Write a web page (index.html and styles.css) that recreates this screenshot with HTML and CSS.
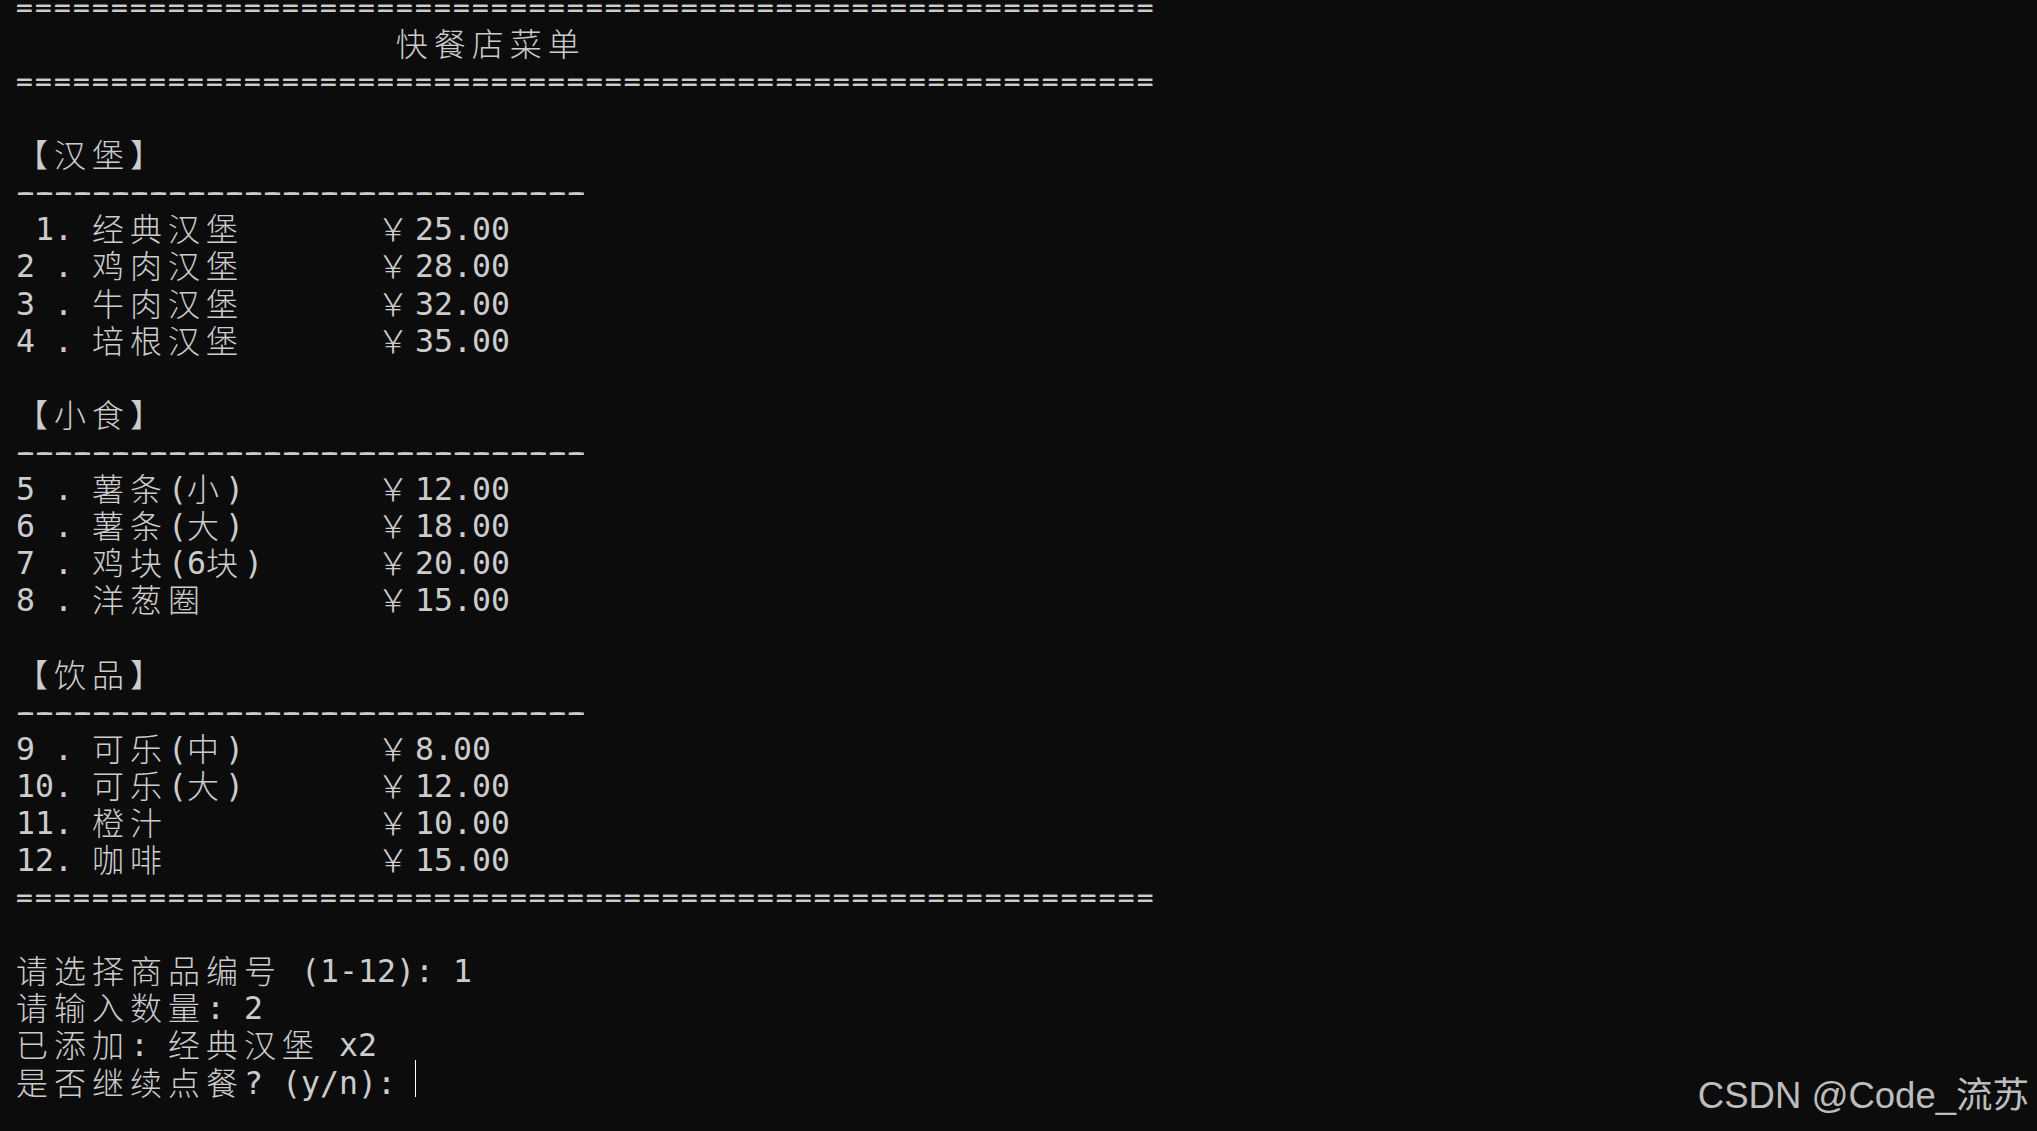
FILE: index.html
```html
<!DOCTYPE html>
<html lang="zh">
<head>
<meta charset="utf-8">
<title>快餐店菜单</title>
<link rel="stylesheet" href="styles.css">
</head>
<body>
<div class="term">
<div class="ln"><span class="eq">============================================================</span></div>
<div class="ln">                    <span class="c">快餐店菜单</span></div>
<div class="ln"><span class="eq">============================================================</span></div>
<div class="ln"></div>
<div class="ln"><span class="c">【汉堡】</span></div>
<div class="ln rule-dash">------------------------------</div>
<div class="ln"> 1. <span class="c">经典汉堡</span>       <span class="c">￥</span>25.00</div>
<div class="ln">2 . <span class="c">鸡肉汉堡</span>       <span class="c">￥</span>28.00</div>
<div class="ln">3 . <span class="c">牛肉汉堡</span>       <span class="c">￥</span>32.00</div>
<div class="ln">4 . <span class="c">培根汉堡</span>       <span class="c">￥</span>35.00</div>
<div class="ln"></div>
<div class="ln"><span class="c">【小食】</span></div>
<div class="ln rule-dash">------------------------------</div>
<div class="ln">5 . <span class="c">薯条</span>(<span class="c">小</span>)       <span class="c">￥</span>12.00</div>
<div class="ln">6 . <span class="c">薯条</span>(<span class="c">大</span>)       <span class="c">￥</span>18.00</div>
<div class="ln">7 . <span class="c">鸡块</span>(6<span class="c">块</span>)      <span class="c">￥</span>20.00</div>
<div class="ln">8 . <span class="c">洋葱圈</span>         <span class="c">￥</span>15.00</div>
<div class="ln"></div>
<div class="ln"><span class="c">【饮品】</span></div>
<div class="ln rule-dash">------------------------------</div>
<div class="ln">9 . <span class="c">可乐</span>(<span class="c">中</span>)       <span class="c">￥</span>8.00</div>
<div class="ln">10. <span class="c">可乐</span>(<span class="c">大</span>)       <span class="c">￥</span>12.00</div>
<div class="ln">11. <span class="c">橙汁</span>           <span class="c">￥</span>10.00</div>
<div class="ln">12. <span class="c">咖啡</span>           <span class="c">￥</span>15.00</div>
<div class="ln"><span class="eq">============================================================</span></div>
<div class="ln"></div>
<div class="ln"><span class="c">请选择商品编号</span> (1-12): 1</div>
<div class="ln"><span class="c">请输入数量</span>: 2</div>
<div class="ln"><span class="c">已添加</span>: <span class="c">经典汉堡</span> x2</div>
<div class="ln"><span class="c">是否继续点餐</span>? (y/n): <span class="cursor"></span></div>
</div>
<div class="wm">CSDN @Code_流苏</div>
</body>
</html>
```

FILE: styles.css
```css
html {
  background: #0c0c0c;
}

body {
  margin: 0;
  height: 1131px;
  overflow: hidden;
  position: relative;
  background: #0c0c0c;
}

.term {
  margin-top: -11.2px;
  padding-left: 16px;
  color: #cccccc;
  font-family: "DejaVu Sans Mono", "Noto Sans CJK SC", monospace;
  font-size: 31.56px;
}

.ln {
  height: 37.1px;
  line-height: 37.1px;
  white-space: pre;
}

.c {
  font-family: "Noto Sans CJK SC", "Noto Sans CJK JP", sans-serif;
  font-size: 32px;
  font-weight: 300;
  letter-spacing: 6px;
  line-height: 20px;
  vertical-align: -1px;
}

.eq {
  font-size: 27px;
  letter-spacing: 2.74px;
  line-height: 20px;
  vertical-align: 1px;
  text-shadow: 0.6px 0 #cccccc;
}

.rule-dash {
  text-shadow: 3.5px 0 #cccccc, -3.5px 0 #cccccc;
}

.cursor {
  display: inline-block;
  width: 1px;
  height: 36.6px;
  margin-top: -8px;
  vertical-align: -3px;
  background: #ffffff;
}

.wm {
  position: absolute;
  right: 8px;
  bottom: 17px;
  font-family: "Liberation Sans", "Noto Sans CJK SC", sans-serif;
  font-size: 36.5px;
  line-height: 1;
  color: #bdbdbd;
  white-space: nowrap;
}
```
